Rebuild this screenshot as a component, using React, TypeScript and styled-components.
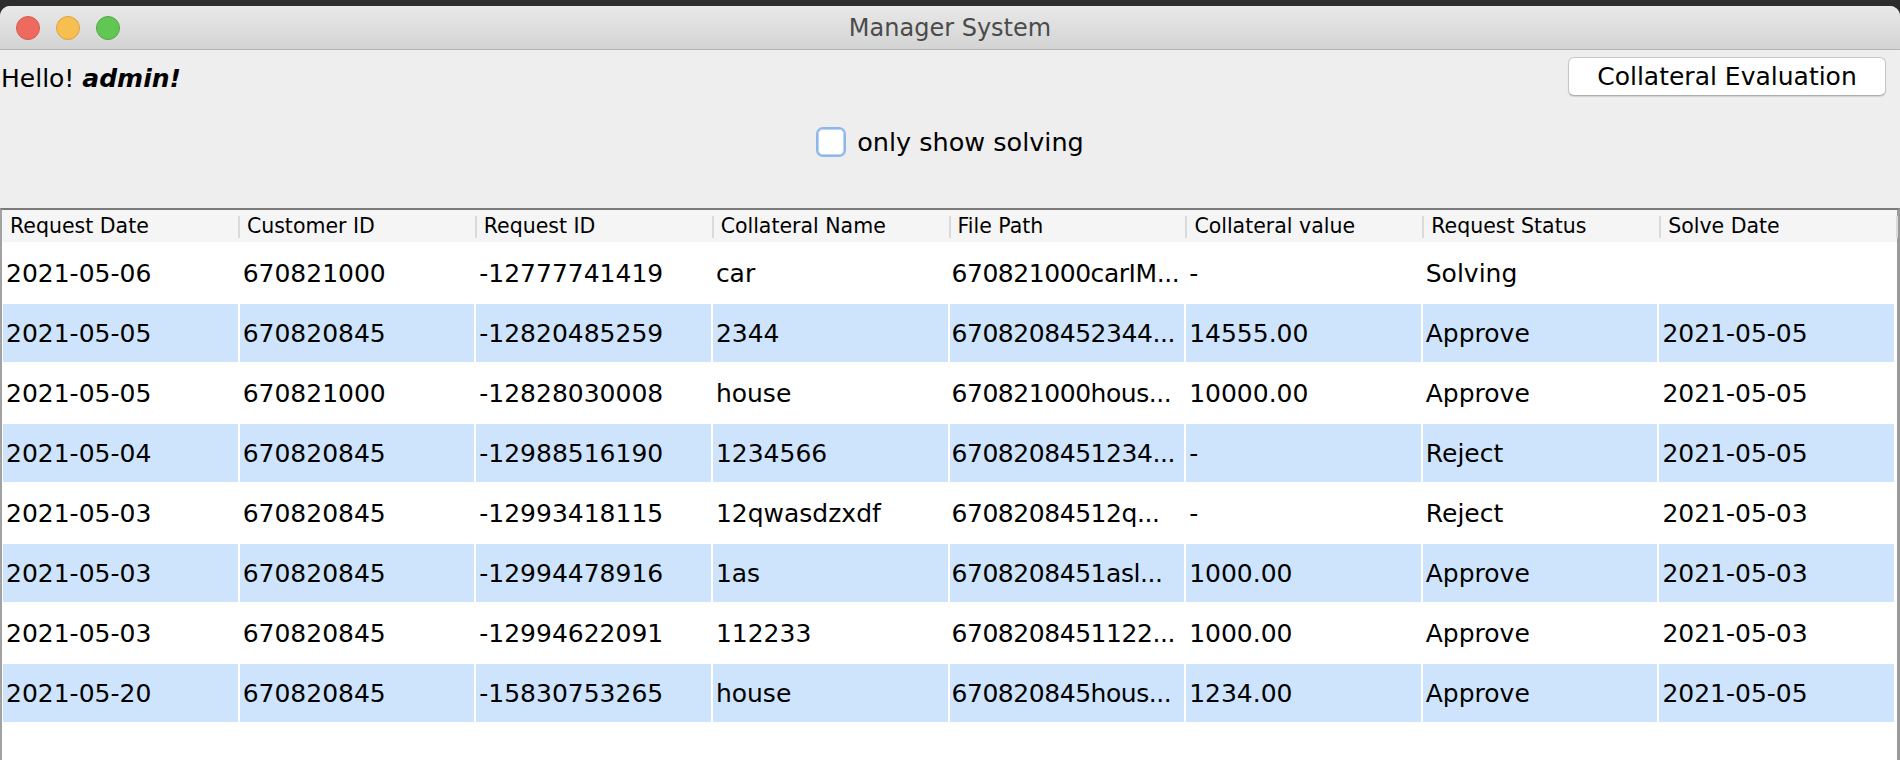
import React from "react";
import styled, { createGlobalStyle } from "styled-components";

const GlobalStyle = createGlobalStyle`
  html, body {
    margin: 0;
    padding: 0;
    background: #2d2d2d;
    font-family: "DejaVu Sans", "Liberation Sans", sans-serif;
  }
  #root { height: 760px; }
`;

const Window = styled.div`
  margin-top: 6px;
  height: 754px;
  display: flex;
  flex-direction: column;
  border-radius: 10px 10px 0 0;
  overflow: hidden;
  background: #eeeeee;
`;

const TitleBar = styled.div`
  height: 43px;
  display: grid;
  grid-template-columns: 1fr auto 1fr;
  align-items: center;
  background: linear-gradient(#e9e9e9, #d3d3d3);
  border-bottom: 1px solid #b3b3b3;
`;

const Lights = styled.div`
  display: flex;
  gap: 16px;
  padding-left: 16px;
`;

const Light = styled.span<{ $fill: string; $edge: string }>`
  width: 22px;
  height: 22px;
  border-radius: 50%;
  background: ${(p) => p.$fill};
  border: 1px solid ${(p) => p.$edge};
`;

const Title = styled.div`
  font-size: 24px;
  color: #4b4b4b;
  padding-top: 1px;
`;

const TopRow = styled.div`
  display: flex;
  justify-content: space-between;
  align-items: center;
  padding: 7px 14px 0 1px;
`;

const Hello = styled.div`
  font-size: 25px;
  color: #000;
  margin-top: 3px;
  b {
    font-weight: bold;
    font-style: italic;
  }
`;

const Button = styled.button`
  width: 318px;
  height: 39px;
  background: #ffffff;
  border: 1px solid #c6c6c6;
  border-bottom-color: #aeaeae;
  border-radius: 6px;
  box-shadow: 0 1px 1px rgba(0, 0, 0, 0.12);
  font-family: "DejaVu Sans", "Liberation Sans", sans-serif;
  font-size: 25px;
  color: #000;
  padding: 0;
`;

const CheckRow = styled.label`
  margin-top: 31px;
  display: flex;
  justify-content: center;
  align-items: center;
  gap: 11px;
  font-size: 25.5px;
  color: #000;
`;

const CheckBox = styled.span`
  width: 26px;
  height: 26px;
  border-radius: 7px;
  background: #fff;
  border: 2px solid #8fb8ea;
  box-shadow: inset 0 0 0 1px #b9d3f3;
`;

const TableWrap = styled.div`
  margin-top: 51px;
  flex: 1;
  background: #ffffff;
  border-top: 2px solid #7a7a7a;
  border-left: 2px solid #a2a2a2;
  border-right: 3px solid #9a9a9a;
  display: flex;
  flex-direction: column;
`;

const Grid = styled.div`
  display: grid;
  grid-template-columns: repeat(8, 1fr);
  column-gap: 2px;
  padding: 0 3px 0 1px;
`;

const Header = styled(Grid)`
  height: 32px;
  background: #f5f5f5;
  padding-right: 1px;
`;

const HeadCell = styled.div`
  position: relative;
  display: flex;
  align-items: center;
  padding-left: 7px;
  font-size: 20.5px;
  color: #000;
  white-space: nowrap;
  &::after {
    content: "";
    position: absolute;
    right: -2px;
    top: 6px;
    bottom: 4px;
    width: 2px;
    background: #dadada;
  }
`;

const Row = styled(Grid)`
  height: 60px;
  box-sizing: border-box;
  padding-top: 2px;
`;

const Cell = styled.div<{ $alt: boolean; $tight: boolean }>`
  background: ${(p) => (p.$alt ? "#cee4fc" : "#ffffff")};
  display: flex;
  align-items: center;
  padding-left: ${(p) => (p.$tight ? "2px" : "3px")};
  font-size: 25px;
  letter-spacing: ${(p) => (p.$tight ? "-0.45px" : "0")};
  color: #000;
  white-space: nowrap;
  overflow: hidden;
`;

const columns = [
  "Request Date",
  "Customer ID",
  "Request ID",
  "Collateral Name",
  "File Path",
  "Collateral value",
  "Request Status",
  "Solve Date",
];

const rows: string[][] = [
  ["2021-05-06", "670821000", "-12777741419", "car", "670821000carIM...", "-", "Solving", ""],
  ["2021-05-05", "670820845", "-12820485259", "2344", "6708208452344...", "14555.00", "Approve", "2021-05-05"],
  ["2021-05-05", "670821000", "-12828030008", "house", "670821000hous...", "10000.00", "Approve", "2021-05-05"],
  ["2021-05-04", "670820845", "-12988516190", "1234566", "6708208451234...", "-", "Reject", "2021-05-05"],
  ["2021-05-03", "670820845", "-12993418115", "12qwasdzxdf", "67082084512q...", "-", "Reject", "2021-05-03"],
  ["2021-05-03", "670820845", "-12994478916", "1as", "6708208451asl...", "1000.00", "Approve", "2021-05-03"],
  ["2021-05-03", "670820845", "-12994622091", "112233", "6708208451122...", "1000.00", "Approve", "2021-05-03"],
  ["2021-05-20", "670820845", "-15830753265", "house", "670820845hous...", "1234.00", "Approve", "2021-05-05"],
];

export default function App() {
  return (
    <>
      <GlobalStyle />
      <Window>
        <TitleBar>
          <Lights>
            <Light $fill="#ee6a5f" $edge="#d65a4f" />
            <Light $fill="#f6bf4f" $edge="#dca23e" />
            <Light $fill="#62c654" $edge="#4faa42" />
          </Lights>
          <Title>Manager System</Title>
          <div />
        </TitleBar>
        <TopRow>
          <Hello>
            Hello! <b>admin!</b>
          </Hello>
          <Button>Collateral Evaluation</Button>
        </TopRow>
        <CheckRow>
          <CheckBox />
          only show solving
        </CheckRow>
        <TableWrap>
          <Header>
            {columns.map((c) => (
              <HeadCell key={c}>{c}</HeadCell>
            ))}
          </Header>
          {rows.map((r, i) => (
            <Row key={i}>
              {r.map((v, j) => (
                <Cell key={j} $alt={i % 2 === 1} $tight={j === 4}>
                  {v}
                </Cell>
              ))}
            </Row>
          ))}
        </TableWrap>
      </Window>
    </>
  );
}
